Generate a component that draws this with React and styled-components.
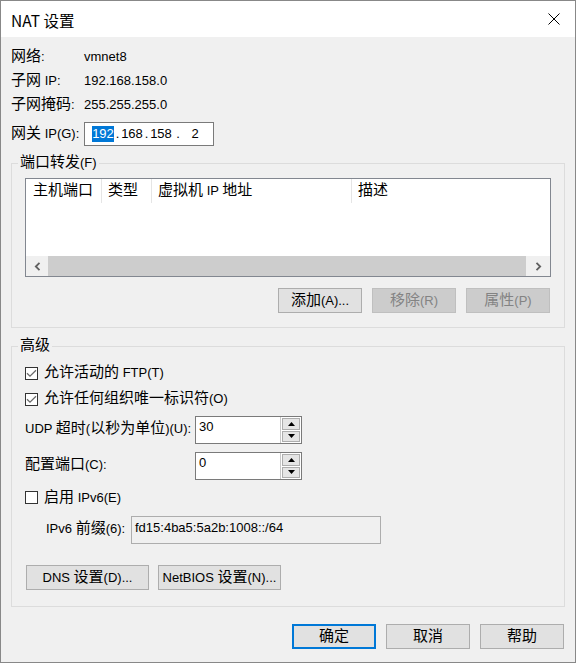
import React from "react";
import styled, { createGlobalStyle } from "styled-components";

const GlobalStyle = createGlobalStyle`
  html, body {
    margin: 0;
    padding: 0;
    background: #ffffff;
  }
  body {
    font-family: "Liberation Sans", "Noto Sans CJK SC", sans-serif;
    font-size: 13px;
    color: #000;
  }
  * {
    box-sizing: border-box;
  }
`;

const HAN = /([\u3000-\u9fff\uff00-\uffef]+)/;

const Han = styled.span`
  font-family: "Noto Sans CJK SC", sans-serif;
  font-size: 15px;
  line-height: 0;
`;

// splits a label so the chinese runs get the wider CJK face
function Txt({ children }) {
  return String(children)
    .split(HAN)
    .map((part, i) => (i % 2 ? <Han key={i}>{part}</Han> : part));
}

const Window = styled.div`
  width: 576px;
  height: 663px;
  border: 1px solid #888888;
  background: #f0f0f0;
  display: flex;
  flex-direction: column;
  line-height: 16px;
`;

const TitleBar = styled.div`
  height: 36px;
  flex: none;
  background: #ffffff;
  display: flex;
  align-items: center;
  justify-content: space-between;
  padding: 0 15px 0 10px;
`;

const Title = styled.div`
  font-family: "Noto Sans CJK SC", sans-serif;
  font-size: 15.5px;
  padding-top: 1px;
`;

const Body = styled.div`
  flex: 1;
  display: flex;
  flex-direction: column;
  padding: 8px 10px 0;
`;

const InfoRow = styled.div`
  display: grid;
  grid-template-columns: 73px 1fr;
  align-items: center;
  height: 24px;
  margin-top: ${(p) => p.$gap || 0}px;
`;

const IpBox = styled.div`
  width: 130px;
  height: 24px;
  border: 1px solid #7a7a7a;
  background: #ffffff;
  display: flex;
  align-items: center;
  padding-left: 7px;
`;

const IpField = styled.span`
  width: ${(p) => p.$w}px;
  text-align: center;
`;

const IpSel = styled.span`
  background: #0078d7;
  color: #ffffff;
  padding: 0 0 1px;
`;

const IpDot = styled.span`
  width: ${(p) => p.$w}px;
  text-align: center;
`;

const Group = styled.fieldset`
  margin: ${(p) => p.$top}px 0 0;
  padding: ${(p) => p.$pad};
  border: 1px solid #dcdcdc;
  min-width: 0;
  display: flex;
  flex-direction: column;
`;

const Legend = styled.legend`
  padding: 0 2px;
  margin-left: -7px;
  line-height: 16px;
`;

const ListBox = styled.div`
  height: 99px;
  border: 1px solid #828790;
  background: #ffffff;
  display: flex;
  flex-direction: column;
`;

const Header = styled.div`
  height: 24px;
  display: flex;
`;

const HeaderCell = styled.div`
  width: ${(p) => p.$w}px;
  padding-left: ${(p) => p.$pl || 6}px;
  display: flex;
  align-items: center;
  border-right: ${(p) => (p.$last ? "none" : "1px solid #e5e5e5")};
  flex: ${(p) => (p.$last ? 1 : "none")};
`;

const ListSpace = styled.div`
  flex: 1;
`;

const ScrollBar = styled.div`
  height: 20px;
  display: flex;
  background: #f0f0f0;
`;

const ScrollArrow = styled.div`
  width: ${(p) => p.$w}px;
  display: flex;
  align-items: center;
  justify-content: center;
`;

const Thumb = styled.div`
  flex: 1;
  background: #cdcdcd;
`;

const ButtonRow = styled.div`
  display: flex;
  justify-content: ${(p) => p.$justify || "flex-end"};
  gap: ${(p) => p.$gap}px;
  margin-top: ${(p) => p.$top}px;
  padding: ${(p) => p.$pad || "0"};
`;

const Button = styled.button`
  width: ${(p) => p.$w || 84}px;
  height: 25px;
  margin: 0;
  padding: 0;
  font: inherit;
  line-height: 16px;
  color: #000;
  background: #e1e1e1;
  border: 1px solid #adadad;
  border-radius: 0;

  &:disabled {
    background: #cccccc;
    border-color: #bfbfbf;
    color: #838383;
  }
`;

const DefaultButton = styled(Button)`
  border: 2px solid #0078d7;
`;

const CheckRow = styled.label`
  display: flex;
  align-items: center;
  gap: 6px;
  height: ${(p) => p.$h || 26}px;
  margin-top: ${(p) => p.$top || 0}px;
`;

const Box = styled.span`
  width: 13px;
  height: 13px;
  border: 1px solid #333333;
  background: #ffffff;
  display: flex;
`;

const FieldRow = styled.div`
  display: flex;
  align-items: center;
  height: 28px;
  margin-top: ${(p) => p.$top}px;
  padding-left: ${(p) => p.$indent || 0}px;
`;

const FieldLabel = styled.div`
  width: ${(p) => p.$w}px;
  flex: none;
  padding-bottom: 3px;
`;

const SpinBox = styled.div`
  width: 107px;
  height: 28px;
  border: 1px solid #7a7a7a;
  background: #ffffff;
  display: flex;
`;

const SpinValue = styled.div`
  flex: 1;
  padding: 2px 3px;
`;

const SpinButtons = styled.div`
  width: 21px;
  border-left: 1px solid #c8c8c8;
  padding: 1px;
  display: flex;
  flex-direction: column;
  gap: 1px;
`;

const SpinButton = styled.div`
  flex: 1;
  background: #e5e5e5;
  border: 1px solid #adadad;
  display: flex;
  align-items: center;
  justify-content: center;
`;

const ReadOnlyField = styled.div`
  width: 250px;
  height: 28px;
  border: 1px solid #adadad;
  padding: 3px 3px;
`;

const Close = () => (
  <svg width="12" height="12" viewBox="0 0 12 12">
    <path d="M0.5 0.5 L11.5 11.5 M11.5 0.5 L0.5 11.5" stroke="#000" strokeWidth="1" />
  </svg>
);

const Chevron = ({ dir }) => (
  <svg width="7" height="9" viewBox="0 0 7 9">
    <path
      d={dir === "left" ? "M5.5 0.8 L1.8 4.5 L5.5 8.2" : "M1.5 0.8 L5.2 4.5 L1.5 8.2"}
      fill="none"
      stroke="#606060"
      strokeWidth="1.8"
    />
  </svg>
);

const Tri = ({ up }) => (
  <svg width="7" height="4" viewBox="0 0 7 4">
    <polygon points={up ? "3.5,0 7,4 0,4" : "0,0 7,0 3.5,4"} fill="#000" />
  </svg>
);

const Check = () => (
  <svg width="11" height="11" viewBox="0 0 11 11">
    <path d="M1 5.2 L4 8.2 L10 2.2" fill="none" stroke="#6a6a6a" strokeWidth="1.3" />
  </svg>
);

function CheckBox({ checked, label, ...rest }) {
  return (
    <CheckRow {...rest}>
      <Box>{checked && <Check />}</Box>
      <span>
        <Txt>{label}</Txt>
      </span>
    </CheckRow>
  );
}

function Spin({ value }) {
  return (
    <SpinBox>
      <SpinValue>{value}</SpinValue>
      <SpinButtons>
        <SpinButton>
          <Tri up />
        </SpinButton>
        <SpinButton>
          <Tri />
        </SpinButton>
      </SpinButtons>
    </SpinBox>
  );
}

const info = [
  ["网络:", "vmnet8"],
  ["子网 IP:", "192.168.158.0"],
  ["子网掩码:", "255.255.255.0"],
];

const columns = [
  { label: "主机端口", w: 76, pl: 7 },
  { label: "类型", w: 50 },
  { label: "虚拟机 IP 地址", w: 200 },
  { label: "描述", last: true },
];

export default function App() {
  return (
    <>
      <GlobalStyle />
      <Window>
        <TitleBar>
          <Title>NAT 设置</Title>
          <Close />
        </TitleBar>
        <Body>
          {info.map(([k, v]) => (
            <InfoRow key={k}>
              <span>
                <Txt>{k}</Txt>
              </span>
              <span>{v}</span>
            </InfoRow>
          ))}
          <InfoRow $gap={5}>
            <span>
              <Txt>网关 IP(G):</Txt>
            </span>
            <IpBox>
              <IpField $w={22}>
                <IpSel>192</IpSel>
              </IpField>
              <IpDot $w={7}>.</IpDot>
              <IpField $w={22}>168</IpField>
              <IpDot $w={7}>.</IpDot>
              <IpField $w={22}>158</IpField>
              <IpDot $w={12}>.</IpDot>
              <IpField $w={22}>2</IpField>
            </IpBox>
          </InfoRow>

          <Group $top={9} $pad="7px 13px 14px">
            <Legend>
              <Txt>端口转发(F)</Txt>
            </Legend>
            <ListBox>
              <Header>
                {columns.map((c) => (
                  <HeaderCell key={c.label} $w={c.w} $pl={c.pl} $last={c.last}>
                    <span>
                      <Txt>{c.label}</Txt>
                    </span>
                  </HeaderCell>
                ))}
              </Header>
              <ListSpace />
              <ScrollBar>
                <ScrollArrow $w={22}>
                  <Chevron dir="left" />
                </ScrollArrow>
                <Thumb />
                <ScrollArrow $w={24}>
                  <Chevron dir="right" />
                </ScrollArrow>
              </ScrollBar>
            </ListBox>
            <ButtonRow $gap={10} $top={11} $pad="0 1px 0 0">
              <Button>
                <Txt>添加(A)...</Txt>
              </Button>
              <Button disabled>
                <Txt>移除(R)</Txt>
              </Button>
              <Button disabled>
                <Txt>属性(P)</Txt>
              </Button>
            </ButtonRow>
          </Group>

          <Group $top={10} $pad="6px 13px 16px">
            <Legend>
              <Txt>高级</Txt>
            </Legend>
            <CheckBox checked label="允许活动的 FTP(T)" />
            <CheckBox checked label="允许任何组织唯一标识符(O)" />
            <FieldRow $top={4}>
              <FieldLabel $w={170}>
                <Txt>UDP 超时(以秒为单位)(U):</Txt>
              </FieldLabel>
              <Spin value="30" />
            </FieldRow>
            <FieldRow $top={8}>
              <FieldLabel $w={170}>
                <Txt>配置端口(C):</Txt>
              </FieldLabel>
              <Spin value="0" />
            </FieldRow>
            <CheckBox label="启用 IPv6(E)" $top={4} $h={27} />
            <FieldRow $top={5} $indent={21}>
              <FieldLabel $w={85}>
                <Txt>IPv6 前缀(6):</Txt>
              </FieldLabel>
              <ReadOnlyField>fd15:4ba5:5a2b:1008::/64</ReadOnlyField>
            </FieldRow>
            <ButtonRow $gap={9} $top={21} $justify="flex-start" $pad="0 0 0 1px">
              <Button $w={123}>
                <Txt>DNS 设置(D)...</Txt>
              </Button>
              <Button $w={123}>
                <Txt>NetBIOS 设置(N)...</Txt>
              </Button>
            </ButtonRow>
          </Group>

          <ButtonRow $gap={10} $top={17} $pad="0 1px 0 0">
            <DefaultButton>
              <Txt>确定</Txt>
            </DefaultButton>
            <Button>
              <Txt>取消</Txt>
            </Button>
            <Button>
              <Txt>帮助</Txt>
            </Button>
          </ButtonRow>
        </Body>
      </Window>
    </>
  );
}
